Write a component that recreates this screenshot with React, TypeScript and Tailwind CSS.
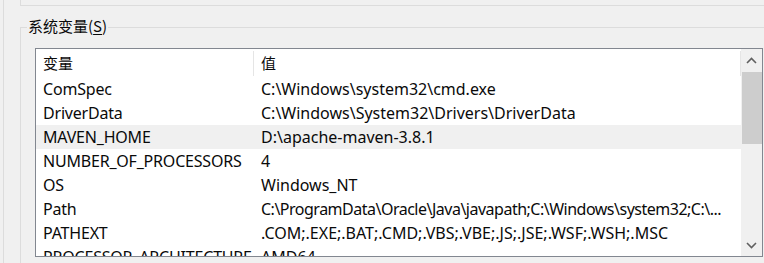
import React from "react";

const rows: [string, string][] = [
  ["ComSpec", "C:\\Windows\\system32\\cmd.exe"],
  ["DriverData", "C:\\Windows\\System32\\Drivers\\DriverData"],
  ["MAVEN_HOME", "D:\\apache-maven-3.8.1"],
  ["NUMBER_OF_PROCESSORS", "4"],
  ["OS", "Windows_NT"],
  ["Path", "C:\\ProgramData\\Oracle\\Java\\javapath;C:\\Windows\\system32;C:\\..."],
  ["PATHEXT", ".COM;.EXE;.BAT;.CMD;.VBS;.VBE;.JS;.JSE;.WSF;.WSH;.MSC"],
  ["PROCESSOR_ARCHITECTURE", "AMD64"],
];

export default function App() {
  return (
    <div className="w-[764px] h-[263px] bg-[#f0f0f0] overflow-hidden text-[15px] text-[#0a0a0a] font-['Noto_Sans','Noto_Sans_CJK_SC',sans-serif]">
      <div className="ml-[3px] h-full border-l border-[#dcdcdc] pl-[16px]">
        <div className="h-[6px] w-[800px] border-l border-b border-[#dcdcdc]" />
        <div className="relative mt-[21px] w-[800px] h-[300px] border-l border-t border-[#dcdcdc] pl-[14px] pt-[20px]">
          <div className="absolute left-[6px] top-[-12px] bg-[#f0f0f0] px-[1px] leading-[20px] font-['Noto_Sans_CJK_SC',sans-serif]">
            系统变量(<span className="underline underline-offset-2">S</span>)
          </div>
          <div className="w-[728px] h-[209px] border border-[#828790] bg-white flex overflow-hidden">
            <div className="w-[705px] flex flex-col">
              <div className="h-[28px] flex shrink-0">
                <div className="w-[217px] pl-[7px] flex items-center font-['Noto_Sans_CJK_SC',sans-serif]">变量</div>
                <div className="w-px h-[25px] mt-[2px] bg-[#e5e5e5]" />
                <div className="flex-1 pl-[7px] flex items-center font-['Noto_Sans_CJK_SC',sans-serif]">值</div>
                <div className="w-px h-[25px] mt-[2px] bg-[#e5e5e5]" />
              </div>
              {rows.map(([k, v]) => (
                <div
                  key={k}
                  className={`h-[24px] flex shrink-0 items-center whitespace-nowrap text-[16px] ${k === "MAVEN_HOME" ? "bg-[#f0f0f0]" : ""}`}
                >
                  <div className="w-[218px] pl-[7px] overflow-hidden tracking-[-0.2px]">{k}</div>
                  <div className={`flex-1 pl-[7px] overflow-hidden ${k === "Path" ? "tracking-[-0.5px]" : ""}`}>{v}</div>
                </div>
              ))}
            </div>
            <div className="w-[21px] bg-[#f0f0f0] flex flex-col">
              <div className="h-[23px] flex items-center justify-center">
                <svg width="11" height="7" viewBox="0 0 11 7">
                  <polyline points="1,6 5.5,1.5 10,6" fill="none" stroke="#606060" strokeWidth="1.6" />
                </svg>
              </div>
              <div className="ml-[1px] h-[72px] bg-[#cdcdcd]" />
              <div className="flex-1" />
              <div className="h-[22px] flex items-center justify-center">
                <svg width="11" height="7" viewBox="0 0 11 7">
                  <polyline points="1,1 5.5,5.5 10,1" fill="none" stroke="#606060" strokeWidth="1.6" />
                </svg>
              </div>
            </div>
          </div>
        </div>
      </div>
    </div>
  );
}
